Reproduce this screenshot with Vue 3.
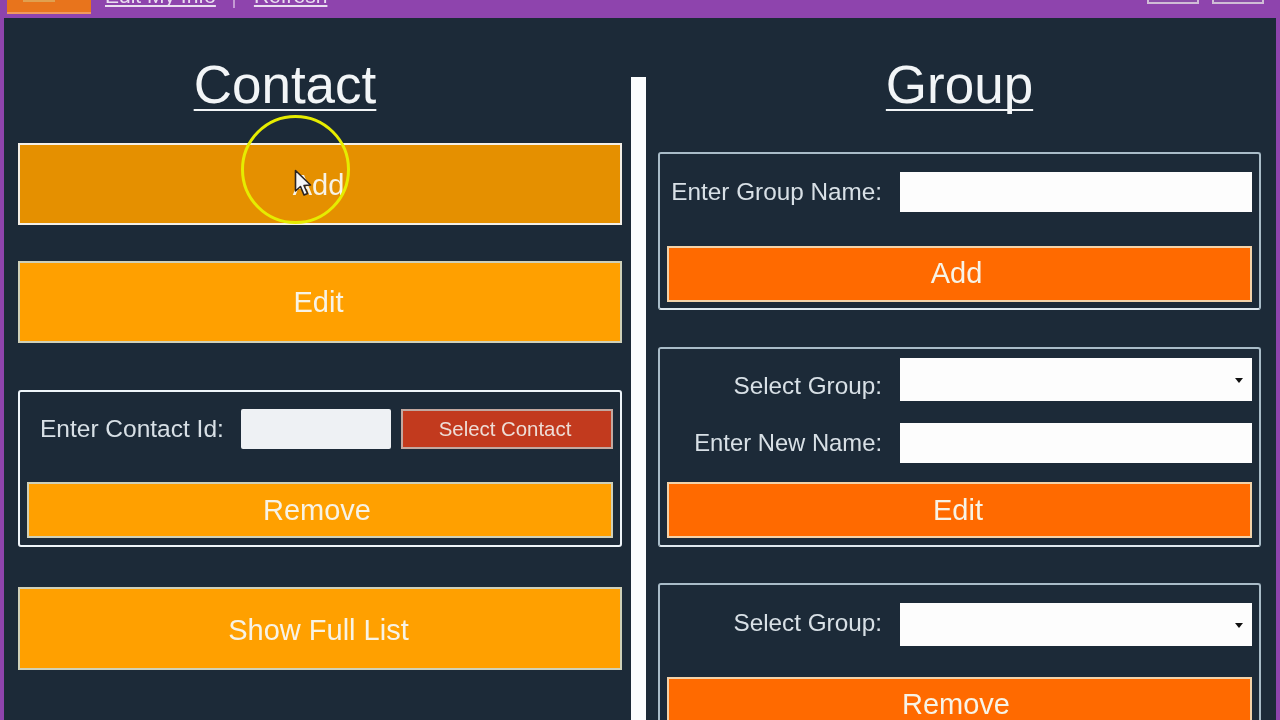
<script setup>
const headerLinks = ['Edit My Info', 'Refresh']
</script>

<template>
  <div class="page">
    <header class="topbar">
      <div class="tab"><span class="tab-inner"></span></div>
      <a class="link link-first">{{ headerLinks[0] }}</a>
      <span class="sep"></span>
      <a class="link">{{ headerLinks[1] }}</a>
      <div class="spacer"></div>
      <span class="winbtn"></span>
      <span class="winbtn"></span>
    </header>

    <main class="main">
      <section class="col col-left">
        <h1 class="title title-contact">Contact</h1>
        <button class="btn btn-large btn-hover">
          Add
          <span class="highlight"></span>
          <svg class="cursor" width="18" height="28" viewBox="0 0 18 28">
            <path d="M1.5 1.5 L1.5 22 L6.5 17.5 L10 26 L13.5 24.5 L10 16.5 L16.5 16 Z" fill="#f4f6f8" stroke="#2a2320" stroke-width="1.6" stroke-linejoin="round"/>
          </svg>
        </button>
        <button class="btn btn-large btn-edit">Edit</button>

        <div class="panel panel-left">
          <div class="id-row">
            <label class="id-label">Enter Contact Id:</label>
            <input class="id-input" type="text" />
            <button class="select-btn">Select Contact</button>
          </div>
          <button class="btn btn-panel">Remove</button>
        </div>

        <button class="btn btn-large btn-list">Show Full List</button>
      </section>

      <div class="divider"></div>

      <section class="col col-right">
        <h1 class="title title-group">Group</h1>

        <div class="panel group-panel panel-add">
          <div class="form-row">
            <label class="form-label">Enter Group Name:</label>
            <input class="form-input" type="text" />
          </div>
          <button class="btn btn-orange btn-add-group">Add</button>
        </div>

        <div class="panel group-panel panel-edit">
          <div class="form-row row-select">
            <label class="form-label label-low">Select Group:</label>
            <div class="form-input select"><span class="caret"></span></div>
          </div>
          <div class="form-row row-second">
            <label class="form-label label-new">Enter New Name:</label>
            <input class="form-input" type="text" />
          </div>
          <button class="btn btn-orange btn-edit-group">Edit</button>
        </div>

        <div class="panel group-panel panel-remove">
          <div class="form-row row-select">
            <label class="form-label label-high">Select Group:</label>
            <div class="form-input select"><span class="caret"></span></div>
          </div>
          <button class="btn btn-orange btn-remove-group">Remove</button>
        </div>
      </section>
    </main>
  </div>
</template>

<style>
html, body { margin: 0; background: #1c2a38; overflow: hidden; }
</style>

<style scoped>
.page {
  width: 1280px;
  height: 720px;
  box-sizing: border-box;
  border-left: 4px solid #8e44ad;
  border-right: 4px solid #8e44ad;
  background: #1c2a38;
  display: flex;
  flex-direction: column;
  overflow: hidden;
  font-family: "Liberation Sans", Arial, sans-serif;
  color: #f2f5f7;
  filter: blur(0.5px);
}
.topbar {
  height: 18px;
  flex: none;
  margin: 0 -4px;
  background: #8e44ad;
  display: flex;
  align-items: flex-end;
  overflow: hidden;
  padding-left: 7px;
  padding-right: 16px;
  box-sizing: border-box;
}
.tab {
  width: 84px;
  height: 14px;
  margin-bottom: 4px;
  box-sizing: border-box;
  background: #e8741c;
  border-bottom: 2px solid #ef9a5e;
  padding-left: 16px;
  flex: none;
}
.tab-inner {
  display: block;
  width: 32px;
  height: 2px;
  background: #e0a050;
}
.link {
  font-size: 21px;
  line-height: 24px;
  color: #eadff0;
  text-decoration: underline;
  text-decoration-skip-ink: none;
  margin-bottom: 10px;
  white-space: nowrap;
}
.link-first { margin-left: 14px; }
.sep {
  width: 2px;
  height: 12px;
  margin: 0 19px 10px 17px;
  background: #c49ad4;
  flex: none;
}
.spacer { flex: 1; }
.winbtn {
  width: 52px;
  height: 8px;
  margin-bottom: 14px;
  margin-left: 13px;
  box-sizing: border-box;
  background: #8b4fa8;
  border: 2px solid #d0bdd6;
  flex: none;
}
.main {
  flex: 1;
  display: flex;
  align-items: flex-start;
  padding-left: 14px;
  min-height: 0;
}
.col { flex: none; width: 604px; display: flex; flex-direction: column; }
.col-left { width: 604px; }
.col-right { width: 603px; }
.divider {
  flex: none;
  width: 15px;
  height: 700px;
  margin: 59px 12px 0 9px;
  background: #fbfdfe;
}
.title {
  margin: 0;
  font-weight: 400;
  font-size: 53px;
  line-height: 56px;
  text-decoration: underline;
  text-decoration-thickness: 2px;
  text-underline-offset: 6px;
  text-decoration-skip-ink: none;
  align-self: center;
  white-space: nowrap;
}
.title-contact { margin: 39px 0 0 -70px; }
.title-group { margin: 39px 0 0 0; }
.btn {
  display: block;
  border: 2px solid #cfd0b8;
  color: #f7f3e6;
  font-family: inherit;
  font-size: 29px;
  padding: 0;
  box-sizing: border-box;
  width: 100%;
}
.btn-large {
  height: 82px;
  background: #ffa000;
  padding-right: 3px;
}
.btn-hover {
  position: relative;
  margin-top: 30px;
  background: #e59000;
  border-color: #f4efe6;
  padding-top: 2px;
}
.btn-edit { margin-top: 36px; }
.btn-list { margin-top: 40px; height: 83px; padding-top: 3px; }
.highlight {
  position: absolute;
  left: 221px;
  top: -30px;
  width: 109px;
  height: 109px;
  border: 3px solid #e6ec00;
  border-radius: 50%;
  box-sizing: border-box;
}
.cursor {
  position: absolute;
  left: 274px;
  top: 24px;
}
.panel {
  box-sizing: border-box;
  border: 2px solid #eef5fa;
  border-radius: 3px;
}
.panel-left {
  margin-top: 47px;
  height: 157px;
  padding: 17px 7px 7px;
}
.id-row {
  display: flex;
  align-items: center;
  height: 40px;
  margin-bottom: 33px;
}
.id-label {
  font-size: 24.5px;
  margin-left: 13px;
  width: 201px;
  flex: none;
  color: #d8e0e6;
  white-space: nowrap;
}
.id-input {
  width: 150px;
  height: 40px;
  box-sizing: border-box;
  border: 0;
  border-radius: 2px;
  background: #eef1f4;
  flex: none;
  padding: 0;
}
.select-btn {
  margin-left: 10px;
  width: 212px;
  height: 40px;
  box-sizing: border-box;
  background: #c23a1e;
  border: 2px solid #c2a8a0;
  color: #eeddd6;
  font-family: inherit;
  font-size: 20.4px;
  padding: 0 4px 0 0;
  flex: none;
}
.btn-panel {
  height: 56px;
  background: #ffa000;
  padding-right: 6px;
}
.group-panel {
  border-color: #a9bcc8;
  border-bottom-color: #dfe8ee;
  padding: 0 7px;
}
.panel-add {
  margin-top: 39px;
  height: 158px;
  padding-top: 18px;
}
.panel-edit {
  margin-top: 37px;
  height: 200px;
  padding-top: 9px;
}
.panel-remove {
  margin-top: 36px;
  height: 200px;
  padding-top: 18px;
}
.form-row {
  display: flex;
  align-items: center;
  justify-content: flex-end;
  height: 40px;
}
.row-select { height: 43px; }
.row-second { margin-top: 22px; }
.form-label {
  font-size: 24.3px;
  color: #d8e0e6;
  margin-right: 18px;
  white-space: nowrap;
}
.label-low { margin-top: 13px; }
.label-high { margin-bottom: 3px; }
.label-new { font-size: 23.8px; }
.form-input {
  width: 352px;
  height: 100%;
  box-sizing: border-box;
  border: 0;
  background: #fdfdfd;
  flex: none;
  padding: 0;
  position: relative;
  display: block;
}
.caret {
  position: absolute;
  right: 9px;
  top: 20px;
  width: 0;
  height: 0;
  border-left: 4px solid transparent;
  border-right: 4px solid transparent;
  border-top: 5px solid #111;
}
.btn-orange {
  height: 56px;
  background: #ff6a00;
  border-color: #f3d2a8;
}
.btn-add-group { margin-top: 34px; padding-right: 6px; padding-bottom: 2px; }
.btn-edit-group { margin-top: 19px; padding-right: 3px; }
.btn-remove-group { margin-top: 31px; padding-right: 7px; padding-bottom: 2px; }
</style>
